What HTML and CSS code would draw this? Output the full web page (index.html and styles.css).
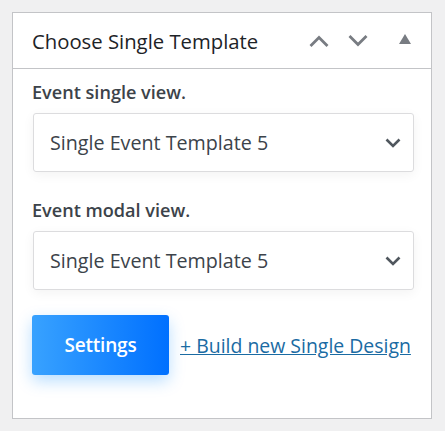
FILE: index.html
```html
<!DOCTYPE html>
<html>
<head>
<meta charset="utf-8">
<link rel="stylesheet" href="styles.css">
</head>
<body>
<div class="box">
  <div class="box-head">
    <h2 class="box-title">Choose Single Template</h2>
    <div class="box-controls">
      <svg class="ctl" width="20" height="12" viewBox="0 0 20 12"><path d="M1.5 11 L10 2.5 L18.5 11" fill="none" stroke="#787c82" stroke-width="2.8"/></svg>
      <svg class="ctl" width="20" height="12" viewBox="0 0 20 12"><path d="M1.5 1 L10 9.5 L18.5 1" fill="none" stroke="#787c82" stroke-width="2.8"/></svg>
      <svg class="ctl tri" width="12" height="10" viewBox="0 0 12 10"><path d="M0 10 L6 0 L12 10 Z" fill="#787c82"/></svg>
    </div>
  </div>
  <div class="box-body">
    <label class="field-label">Event single view.</label>
    <div class="select">
      <span>Single Event Template 5</span>
      <svg width="16" height="10" viewBox="0 0 16 10"><path d="M1.5 1.5 L8 8 L14.5 1.5" fill="none" stroke="#50575e" stroke-width="2.6"/></svg>
    </div>
    <label class="field-label">Event modal view.</label>
    <div class="select">
      <span>Single Event Template 5</span>
      <svg width="16" height="10" viewBox="0 0 16 10"><path d="M1.5 1.5 L8 8 L14.5 1.5" fill="none" stroke="#50575e" stroke-width="2.6"/></svg>
    </div>
    <div class="actions">
      <a class="btn">Settings</a>
      <a class="link">+ Build new Single Design</a>
    </div>
  </div>
</div>
</body>
</html>
```
FILE: styles.css
```css
html, body {
  margin: 0;
  padding: 0;
  background: #f0f0f1;
}
body {
  padding: 12px;
  font-family: "Open Sans", "Noto Sans", sans-serif;
  color: #1d2327;
}
.box {
  width: 418px;
  height: 405px;
  background: #fff;
  border: 1px solid #c3c4c7;
}
.box-head {
  height: 55px;
  border-bottom: 1px solid #c3c4c7;
  display: flex;
  align-items: center;
  padding: 0 20px 0 19px;
}
.box-title {
  margin: 0;
  font-size: 20.3px;
  font-weight: 400;
  flex: 1;
  color: #1d2327;
}
.box-controls {
  display: flex;
  align-items: center;
  gap: 19px;
}
.ctl { display: block; }
.tri { margin-left: 12px; margin-top: -3px; }
.box-body {
  padding: 11px 17px 0 19px;
}
.field-label {
  display: block;
  font-size: 18.1px;
  line-height: 24px;
  font-weight: 600;
  color: #3c434a;
  margin: 0 0 9px 0;
}
.select {
  box-sizing: border-box;
  margin-left: 1px;
  height: 59px;
  border: 1px solid #dcdcde;
  border-radius: 3px;
  display: flex;
  align-items: center;
  justify-content: space-between;
  padding: 0 12px 0 16px;
  box-shadow: 0 3px 12px rgba(0,0,0,0.05);
  font-size: 19.7px;
  color: #3c434a;
  margin-bottom: 26px;
}
.select svg { margin-top: 1px; }
.actions {
  display: flex;
  align-items: center;
  gap: 11px;
  margin-top: -1px;
}
.btn {
  box-sizing: border-box;
  width: 137px;
  height: 60px;
  border-radius: 3px;
  background: linear-gradient(90deg, #38a2ff 0%, #0070ff 100%);
  color: #fff;
  font-weight: 600;
  font-size: 19px;
  letter-spacing: -0.2px;
  display: flex;
  align-items: center;
  justify-content: center;
  box-shadow: 0 6px 16px rgba(0,138,255,0.28);
}
.link {
  color: #1a6ba3;
  text-decoration: underline;
  font-size: 19.45px;
  font-weight: 500;
}
```
